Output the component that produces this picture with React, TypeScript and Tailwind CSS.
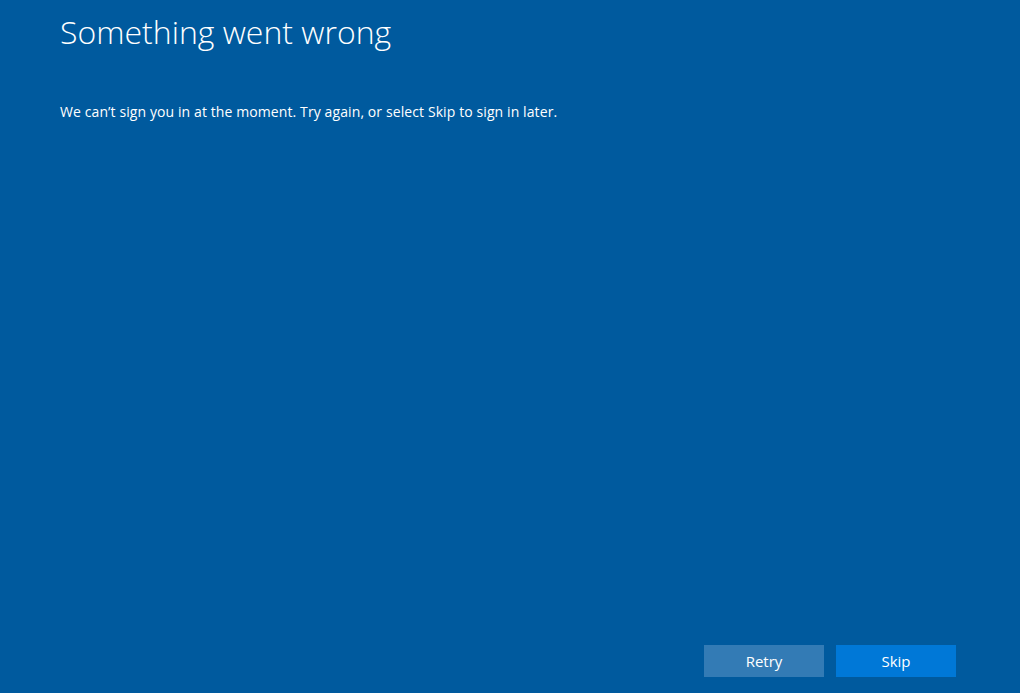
export default function App() {
  return (
    <div
      className="flex h-[693px] w-full flex-col bg-[#005a9e] text-white"
      style={{ fontFamily: '"Open Sans", "Noto Sans", sans-serif' }}
    >
      <div className="pl-[60px] pt-[10px]">
        <h1 className="text-[32px] font-light leading-[44px]">Something went wrong</h1>
        <p className="mt-[48px] text-[14px] leading-[20px] tracking-[0.1px]">
          We can’t sign you in at the moment. Try again, or select Skip to sign in later.
        </p>
      </div>
      <div className="mt-auto flex justify-end gap-[12px] pb-[16px] pr-[64px]">
        <button className="h-[32px] w-[120px] bg-[#337bb5] text-[15px] text-white">Retry</button>
        <button className="h-[32px] w-[120px] bg-[#0078d7] text-[15px] text-white">Skip</button>
      </div>
    </div>
  );
}
